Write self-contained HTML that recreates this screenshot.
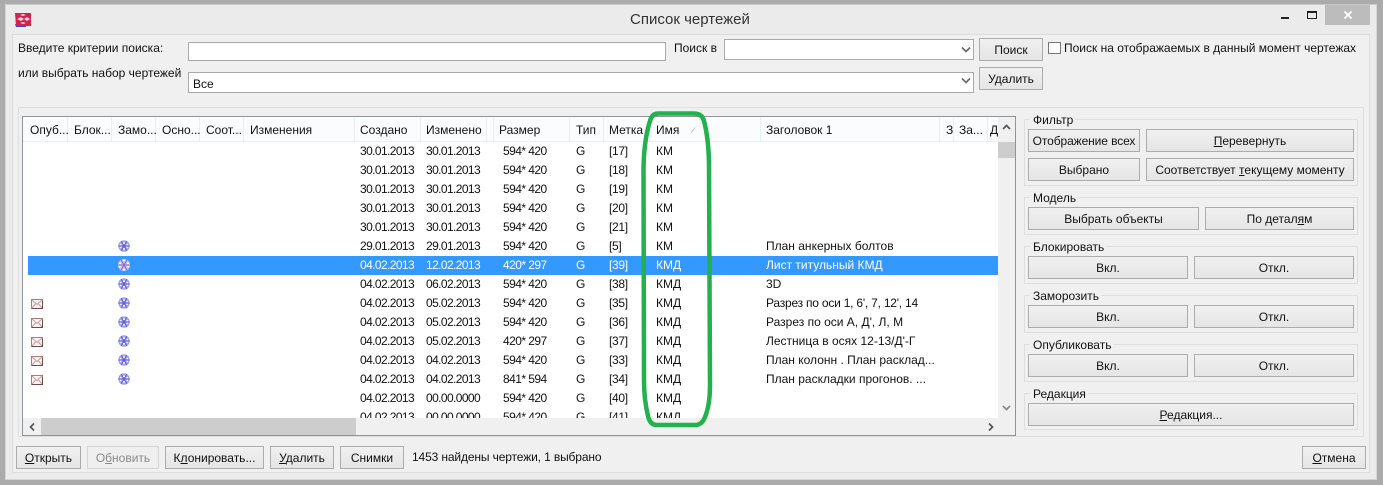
<!DOCTYPE html>
<html><head><meta charset="utf-8"><style>
html,body{margin:0;padding:0}
body{width:1383px;height:485px;position:relative;overflow:hidden;background:#ababab;font:12px/16px "Liberation Sans","Noto Sans CJK JP",sans-serif;color:#111}
div,span,svg{position:absolute;box-sizing:border-box}
span{white-space:nowrap}
u{text-decoration:underline}
.b{border:1px solid #acacac;background:linear-gradient(#f0f0f0,#e5e5e5);text-align:center;height:23px;line-height:22px;color:#111}
.g{border:1px solid #dfdfdf;left:1024px;width:334px}
.t{background:#f0f0f0;padding:0 2px 0 3px;left:1030px;line-height:14px;color:#111}
.i{background:#fff;border:1px solid #a9a9a9}
.h{top:0;height:24px;line-height:27px;color:#111}
.s{top:1px;width:1px;height:23px;background:#e8eff7}
.r{left:0;width:975px;height:19px;line-height:18px}
.r span{top:0}
.a{left:337px;letter-spacing:-.6px}.m{left:403px;letter-spacing:-.6px}.z{left:480px;letter-spacing:-.55px}.y{left:553px}.l{left:586px;letter-spacing:-.3px}.n{left:633px}.q{left:743px}
.sel{background:#3399ff;color:#fff}
</style></head><body>
<div style="left:5px;top:4px;width:1372px;height:476px;background:#ebebeb"></div>
<div style="left:5px;top:4px;width:1372px;height:476px;border:1px solid #d4d4d4;border-top-color:#c8c8c8"></div>
<svg style="left:15px;top:11px" width="17" height="17" viewBox="0 0 17 17"><path d="M0 13h11v3H1z" fill="#2458b8"/><path d="M0 2h16v13H1z M0 2" fill="#d81f50"/><path d="M2 8l4-2 3 2 3-2 3 2-3 2-3-2-3 2zM5 4l3-1 3 1-3 1zM5 12l3-1 3 1-3 1z" fill="#f3d6dc"/></svg>
<span style="left:630px;top:11px;font-size:15px;line-height:18px;color:#333">Список чертежей</span>
<div style="left:1281px;top:17px;width:8px;height:2px;background:#222"></div>
<div style="left:1307px;top:11px;width:10px;height:8px;border:1px solid #222;border-top-width:2px"></div>
<div style="left:1325px;top:5px;width:45px;height:20px;background:#bcbcbc"></div>
<svg style="left:1343px;top:10px" width="10" height="10" viewBox="0 0 10 10"><path d="M1.500 1.500l7 7M8.500 1.500l-7 7" stroke="#fff" stroke-width="1.800" fill="none"/></svg>

<div style="left:12px;top:34px;width:1358px;height:439px;background:#f0f0f0;border:1px solid #dcdcdc"></div>

<span style="left:18px;top:40px">Введите критерии поиска:</span>
<span style="left:18px;top:65px">или выбрать набор чертежей</span>
<div class="i" style="left:188px;top:42px;width:478px;height:19px"></div>
<div class="i" style="left:188px;top:72px;width:786px;height:21px"><span style="left:4px;top:3px">Все</span></div>
<svg style="left:961px;top:77px" width="10" height="8" viewBox="0 0 10 8"><path d="M1 1.500l4 4 4-4" fill="none" stroke="#666" stroke-width="1.600"/></svg>
<span style="left:674px;top:40px">Поиск в</span>
<div class="i" style="left:724px;top:39px;width:250px;height:21px"></div>
<svg style="left:961px;top:46px" width="10" height="8" viewBox="0 0 10 8"><path d="M1 1.500l4 4 4-4" fill="none" stroke="#666" stroke-width="1.600"/></svg>
<div class="b" style="left:979px;top:38px;width:64px">Поиск</div>
<div class="b" style="left:979px;top:67px;width:64px">Удалить</div>
<div style="left:1048px;top:42px;width:13px;height:12px;background:#fff;border:1px solid #777"></div>
<span style="left:1064px;top:40px">Поиск на отображаемых в данный момент чертежах</span>

<div style="left:18px;top:107px;width:1346px;height:330px;border:1px solid #dfdfdf"></div>

<div style="left:22px;top:116px;width:994px;height:320px;border:1px solid #8f949a;background:#fff;overflow:hidden">
 <div style="left:0;top:0;width:975px;height:25px;background:#fbfcfd;border-bottom:1px solid #e8eff7;font-size:12px"></div>
 <div class="s" style="left:44px"></div><div class="s" style="left:88px"></div><div class="s" style="left:132px"></div><div class="s" style="left:176px"></div><div class="s" style="left:220px"></div><div class="s" style="left:331px"></div><div class="s" style="left:397px"></div><div class="s" style="left:463px"></div><div class="s" style="left:470px"></div><div class="s" style="left:546px"></div><div class="s" style="left:580px"></div><div class="s" style="left:626px"></div><div class="s" style="left:737px"></div><div class="s" style="left:916px"></div><div class="s" style="left:930px"></div><div class="s" style="left:964px"></div>
 <span class="h" style="left:7px">Опуб...</span><span class="h" style="left:51px">Блок...</span><span class="h" style="left:95px">Замо...</span><span class="h" style="left:139px">Осно...</span><span class="h" style="left:183px">Соот...</span><span class="h" style="left:227px">Изменения</span><span class="h" style="left:337px">Создано</span><span class="h" style="left:403px">Изменено</span><span class="h" style="left:476px">Размер</span><span class="h" style="left:553px">Тип</span><span class="h" style="left:586px">Метка</span><span class="h" style="left:633px">Имя</span><span class="h" style="left:743px">Заголовок 1</span><span class="h" style="left:923px">З</span><span class="h" style="left:936px">За...</span><span class="h" style="left:967px">Д</span>
 <svg style="left:667px;top:9px" width="7" height="8" viewBox="0 0 7 8"><path d="M1 7L5 1.500" stroke="#c4c4c4" fill="none"/></svg>

 <div style="left:0;top:25px;width:975px;height:276px;overflow:hidden">
  <div class="r" style="top:0"><span class="a">30.01.2013</span><span class="m">30.01.2013</span><span class="z">594* 420</span><span class="y">G</span><span class="l">[17]</span><span class="n">КМ</span></div>
  <div class="r" style="top:19px"><span class="a">30.01.2013</span><span class="m">30.01.2013</span><span class="z">594* 420</span><span class="y">G</span><span class="l">[18]</span><span class="n">КМ</span></div>
  <div class="r" style="top:38px"><span class="a">30.01.2013</span><span class="m">30.01.2013</span><span class="z">594* 420</span><span class="y">G</span><span class="l">[19]</span><span class="n">КМ</span></div>
  <div class="r" style="top:57px"><span class="a">30.01.2013</span><span class="m">30.01.2013</span><span class="z">594* 420</span><span class="y">G</span><span class="l">[20]</span><span class="n">КМ</span></div>
  <div class="r" style="top:76px"><span class="a">30.01.2013</span><span class="m">30.01.2013</span><span class="z">594* 420</span><span class="y">G</span><span class="l">[21]</span><span class="n">КМ</span></div>
  <div class="r" style="top:95px"><span class="a">29.01.2013</span><span class="m">29.01.2013</span><span class="z">594* 420</span><span class="y">G</span><span class="l">[5]</span><span class="n">КМ</span><span class="q">План анкерных болтов</span></div>
  <div class="r sel" style="top:114px;left:5px"><span class="a" style="left:332px">04.02.2013</span><span class="m" style="left:398px">12.02.2013</span><span class="z" style="left:475px">420* 297</span><span class="y" style="left:548px">G</span><span class="l" style="left:581px">[39]</span><span class="n" style="left:628px">КМД</span><span class="q" style="left:738px">Лист титульный КМД</span></div>
  <div class="r" style="top:133px"><span class="a">04.02.2013</span><span class="m">06.02.2013</span><span class="z">594* 420</span><span class="y">G</span><span class="l">[38]</span><span class="n">КМД</span><span class="q">3D</span></div>
  <div class="r" style="top:152px"><span class="a">04.02.2013</span><span class="m">05.02.2013</span><span class="z">594* 420</span><span class="y">G</span><span class="l">[35]</span><span class="n">КМД</span><span class="q" style="letter-spacing:-.22px">Разрез по оси 1, 6', 7, 12', 14</span></div>
  <div class="r" style="top:171px"><span class="a">04.02.2013</span><span class="m">05.02.2013</span><span class="z">594* 420</span><span class="y">G</span><span class="l">[36]</span><span class="n">КМД</span><span class="q">Разрез по оси А, Д', Л, М</span></div>
  <div class="r" style="top:190px"><span class="a">04.02.2013</span><span class="m">05.02.2013</span><span class="z">420* 297</span><span class="y">G</span><span class="l">[37]</span><span class="n">КМД</span><span class="q">Лестница в осях 12-13/Д'-Г</span></div>
  <div class="r" style="top:209px"><span class="a">04.02.2013</span><span class="m">04.02.2013</span><span class="z">594* 420</span><span class="y">G</span><span class="l">[33]</span><span class="n">КМД</span><span class="q">План колонн . План расклад...</span></div>
  <div class="r" style="top:228px"><span class="a">04.02.2013</span><span class="m">04.02.2013</span><span class="z">841* 594</span><span class="y">G</span><span class="l">[34]</span><span class="n">КМД</span><span class="q">План раскладки прогонов. ...</span></div>
  <div class="r" style="top:247px"><span class="a">04.02.2013</span><span class="m">00.00.0000</span><span class="z">594* 420</span><span class="y">G</span><span class="l">[40]</span><span class="n">КМД</span></div>
  <div class="r" style="top:266px"><span class="a">04.02.2013</span><span class="m">00.00.0000</span><span class="z">594* 420</span><span class="y">G</span><span class="l">[41]</span><span class="n">КМД</span></div>

  <svg style="left:0;top:0" width="120" height="276" viewBox="0 0 120 276">
   <defs>
    <g id="sn"><circle cx="6" cy="6" r="5.800" fill="#a6a6ea"/><path d="M.5 6h11M3.200 1.200l5.600 9.600M8.800 1.200L3.200 10.800" stroke="#6262d4" stroke-width="1.100" fill="none"/><path d="M5 2.500h2v1.500H5zM5 8h2v1.500H5zM2 4h1.500v1.200H2zM8.500 4H10v1.200H8.500zM2 6.800h1.500V8H2zM8.500 6.800H10V8H8.500z" fill="#f4f4ff"/></g>
    <g id="sw"><circle cx="6" cy="6" r="6" fill="#c9c2f2"/><path d="M.5 6h11M3.200 1.200l5.600 9.600M8.800 1.200L3.200 10.800" stroke="#8a70c8" stroke-width="1.100" fill="none"/><path d="M5 .5h2v1.500H5zM5 10h2v1.500H5zM1 3.500h2v1.500H1zM9 3.500h2v1.500H9zM1 7h2v1.500H1zM9 7h2v1.500H9z" fill="#fff"/></g>
    <g id="en"><rect x=".5" y=".5" width="11" height="9" fill="#fdf4f4" stroke="#ac7a7a"/><path d="M1 1l5 4.500 5-4.500M1 9l3.500-4M11 9L7.500 5" fill="none" stroke="#c89a9a"/><path d="M1 9.500h10.500V2" fill="none" stroke="#6e4a4a"/></g>
   </defs>
   <use href="#sn" x="95" y="98"/><use href="#sw" x="95" y="117"/><use href="#sn" x="95" y="136"/><use href="#sn" x="95" y="155"/><use href="#sn" x="95" y="174"/><use href="#sn" x="95" y="193"/><use href="#sn" x="95" y="212"/><use href="#sn" x="95" y="231"/>
   <use href="#en" x="8" y="157"/><use href="#en" x="8" y="176"/><use href="#en" x="8" y="195"/><use href="#en" x="8" y="214"/><use href="#en" x="8" y="233"/>
  </svg>
 </div>

 <div style="left:0;top:301px;width:992px;height:17px;background:#f0f0f0"></div>
 <div style="left:18px;top:301px;width:315px;height:17px;background:#cdcdcd"></div>
 <div style="left:975px;top:0;width:17px;height:301px;background:#f0f0f0"></div>
 <div style="left:975px;top:25px;width:17px;height:16px;background:#cdcdcd"></div>
 <svg style="left:978px;top:6px" width="11" height="9" viewBox="0 0 11 9"><path d="M2 6l3.500-3.500L9 6" fill="none" stroke="#555" stroke-width="1.700"/></svg>
 <svg style="left:978px;top:286px" width="11" height="9" viewBox="0 0 11 9"><path d="M2 3l3.500 3.500L9 3" fill="none" stroke="#888" stroke-width="1.700"/></svg>
 <svg style="left:5px;top:305px" width="9" height="10" viewBox="0 0 9 10"><path d="M6 1.500L2.500 5 6 8.500" fill="none" stroke="#555" stroke-width="1.700"/></svg>
 <svg style="left:963px;top:305px" width="9" height="10" viewBox="0 0 9 10"><path d="M3 1.500L6.500 5 3 8.500" fill="none" stroke="#555" stroke-width="1.700"/></svg>
</div>

<div class="g" style="top:119px;height:67px"></div><span class="t" style="top:113px">Фильтр</span>
<div class="b" style="left:1028px;top:129px;width:112px;letter-spacing:-.1px">Отображение всех</div>
<div class="b" style="left:1146px;top:129px;width:208px"><u>П</u>еревернуть</div>
<div class="b" style="left:1028px;top:158px;width:112px">Выбрано</div>
<div class="b" style="left:1146px;top:158px;width:208px">Соответствует <u>т</u>екущему моменту</div>

<div class="g" style="top:197px;height:38px"></div><span class="t" style="top:191px">Модель</span>
<div class="b" style="left:1028px;top:207px;width:171px">Выбрать объекты</div>
<div class="b" style="left:1205px;top:207px;width:149px">По детал<u>я</u>м</div>

<div class="g" style="top:246px;height:38px"></div><span class="t" style="top:240px">Блокировать</span>
<div class="b" style="left:1028px;top:256px;width:160px">Вкл.</div>
<div class="b" style="left:1194px;top:256px;width:160px">Откл.</div>

<div class="g" style="top:295px;height:38px"></div><span class="t" style="top:289px">Заморозить</span>
<div class="b" style="left:1028px;top:305px;width:160px">Вкл.</div>
<div class="b" style="left:1194px;top:305px;width:160px">Откл.</div>

<div class="g" style="top:344px;height:38px"></div><span class="t" style="top:338px">Опубликовать</span>
<div class="b" style="left:1028px;top:354px;width:160px">Вкл.</div>
<div class="b" style="left:1194px;top:354px;width:160px">Откл.</div>

<div class="g" style="top:393px;height:37px"></div><span class="t" style="top:387px">Редакция</span>
<div class="b" style="left:1028px;top:403px;width:326px"><u>Р</u>едакция...</div>

<div class="b" style="left:16px;top:446px;width:65px"><u>О</u>ткрыть</div>
<div class="b" style="left:87px;top:446px;width:72px;color:#8a8a8a;border-color:#d4d4d4;background:#efefef">О<u>б</u>новить</div>
<div class="b" style="left:165px;top:446px;width:99px">К<u>л</u>онировать...</div>
<div class="b" style="left:270px;top:446px;width:64px"><u>У</u>далить</div>
<div class="b" style="left:340px;top:446px;width:64px">Снимки</div>
<span style="left:412px;top:449px;letter-spacing:-.13px">1453 найдены чертежи, 1 выбрано</span>
<div class="b" style="left:1302px;top:446px;width:64px"><u>О</u>тмена</div>

<svg style="left:0;top:0" width="1383" height="485" viewBox="0 0 1383 485"><path d="M658 113.500L694 113.500Q702 113.500 704 121Q709 140 709 168L710 385Q710 405 705 417Q702 425 695 425L657 425Q650 425 648 416Q644 400 644 380L643.500 168Q644 140 650 121Q652 113.500 658 113.500Z" fill="none" stroke="#22b14c" stroke-width="4.500"/></svg>
</body></html>
